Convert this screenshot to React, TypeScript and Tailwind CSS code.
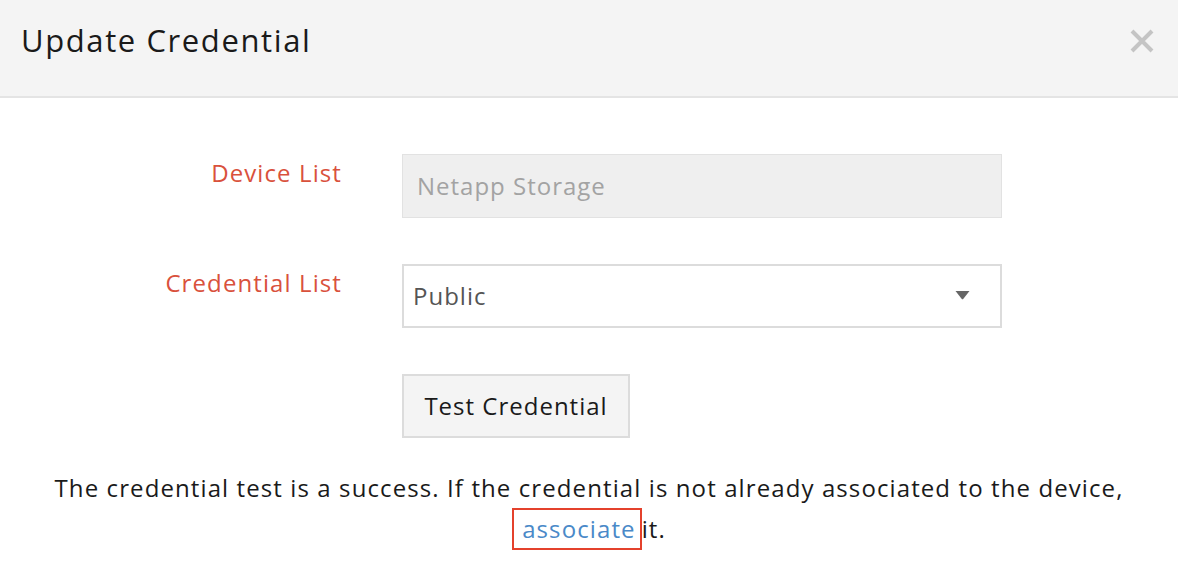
const font = { fontFamily: "'Open Sans', Lato, sans-serif" };

export default function App() {
  return (
    <div className="min-h-[580px] w-full bg-white text-[#1a1a1a]" style={font}>
      <div className="flex h-[98px] items-start justify-between border-b-2 border-[#e4e4e4] bg-[#f4f4f4] pl-[21px] pr-[24px]">
        <h1 className="pt-[20px] text-[31px] leading-[40px] tracking-[1.6px] text-[#1a1a1a]">Update Credential</h1>
        <button type="button" className="mt-[29px]">
          <svg width="24" height="24" viewBox="0 0 24 24">
            <path d="M2 2 L22 22 M22 2 L2 22" stroke="#c4c4c4" strokeWidth="4" strokeLinecap="butt" />
          </svg>
        </button>
      </div>

      <div className="flex flex-col gap-[46px] pt-[56px]">
        <div className="flex items-start gap-[60px]">
          <label className="w-[342px] pt-[1px] text-right text-[24px] leading-[36px] tracking-[1.1px] text-[#d9513c]">
            Device List
          </label>
          <div className="flex h-[64px] w-[600px] items-center border border-[#e2e2e2] bg-[#efefef] pl-[14px] text-[24px] tracking-[1px] text-[#a3a3a3]">
            Netapp Storage
          </div>
        </div>

        <div className="flex items-start gap-[60px]">
          <label className="w-[342px] pt-[1px] text-right text-[24px] leading-[36px] tracking-[1.1px] text-[#d9513c]">
            Credential List
          </label>
          <div className="flex h-[64px] w-[600px] items-center justify-between border-2 border-[#dcdcdc] bg-white pl-[9px] pr-[30px] text-[24px] tracking-[1px] text-[#555555]">
            <span>Public</span>
            <svg width="15" height="10" viewBox="0 0 15 10" className="mb-[2px]">
              <path d="M0.5 1 H14.5 L8.4 8.8 Q7.5 9.8 6.6 8.8 Z" fill="#666666" />
            </svg>
          </div>
        </div>

        <div className="flex gap-[60px]">
          <div className="w-[342px]" />
          <button
            type="button"
            className="h-[64px] w-[228px] border-2 border-[#dcdcdc] bg-[#f4f4f4] text-[24px] tracking-[1px] text-[#1a1a1a]"
          >
            Test Credential
          </button>
        </div>
      </div>

      <p className="mt-[30px] px-[10px] text-center text-[24px] leading-[40px] tracking-[1.1px] text-[#1a1a1a]">
        The credential test is a success. If the credential is not already associated to the device,
        <br />
        <span className="inline-block border-2 border-[#e4412c] pl-[8px] pr-[4px] leading-[38px] text-[#4a89c8]">
          associate
        </span>
        it.
      </p>
    </div>
  );
}
